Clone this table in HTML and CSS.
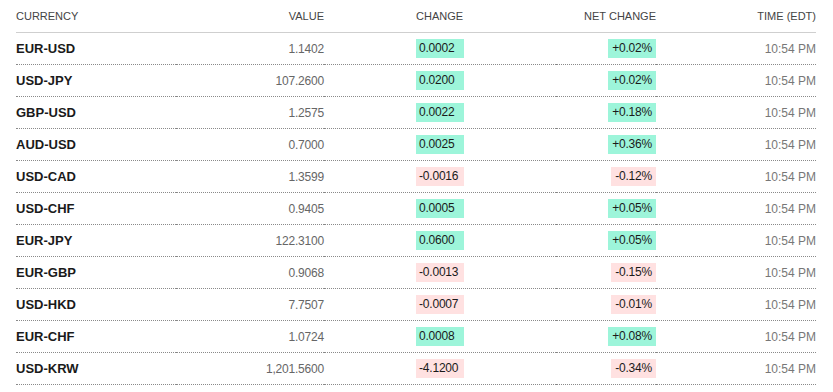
FILE: index.html
```html
<!DOCTYPE html>
<html>
<head>
<meta charset="utf-8">
<link rel="stylesheet" href="styles.css">
</head>
<body>
<div class="wrap">
<table class="fx">
  <colgroup>
    <col class="c-cur"><col class="c-val"><col class="c-chg"><col class="c-net"><col class="c-time">
  </colgroup>
  <thead>
    <tr>
      <th class="left">CURRENCY</th>
      <th class="right">VALUE</th>
      <th class="chg">CHANGE</th>
      <th class="right">NET CHANGE</th>
      <th class="right">TIME (EDT)</th>
    </tr>
  </thead>
  <tbody>
    <tr><td class="cur">EUR-USD</td><td class="val">1.1402</td><td class="chg"><span class="badge up">0.0002</span></td><td class="net"><span class="badge up">+0.02%</span></td><td class="time">10:54 PM</td></tr>
    <tr><td class="cur">USD-JPY</td><td class="val">107.2600</td><td class="chg"><span class="badge up">0.0200</span></td><td class="net"><span class="badge up">+0.02%</span></td><td class="time">10:54 PM</td></tr>
    <tr><td class="cur">GBP-USD</td><td class="val">1.2575</td><td class="chg"><span class="badge up">0.0022</span></td><td class="net"><span class="badge up">+0.18%</span></td><td class="time">10:54 PM</td></tr>
    <tr><td class="cur">AUD-USD</td><td class="val">0.7000</td><td class="chg"><span class="badge up">0.0025</span></td><td class="net"><span class="badge up">+0.36%</span></td><td class="time">10:54 PM</td></tr>
    <tr><td class="cur">USD-CAD</td><td class="val">1.3599</td><td class="chg"><span class="badge down">-0.0016</span></td><td class="net"><span class="badge down">-0.12%</span></td><td class="time">10:54 PM</td></tr>
    <tr><td class="cur">USD-CHF</td><td class="val">0.9405</td><td class="chg"><span class="badge up">0.0005</span></td><td class="net"><span class="badge up">+0.05%</span></td><td class="time">10:54 PM</td></tr>
    <tr><td class="cur">EUR-JPY</td><td class="val">122.3100</td><td class="chg"><span class="badge up">0.0600</span></td><td class="net"><span class="badge up">+0.05%</span></td><td class="time">10:54 PM</td></tr>
    <tr><td class="cur">EUR-GBP</td><td class="val">0.9068</td><td class="chg"><span class="badge down">-0.0013</span></td><td class="net"><span class="badge down">-0.15%</span></td><td class="time">10:54 PM</td></tr>
    <tr><td class="cur">USD-HKD</td><td class="val">7.7507</td><td class="chg"><span class="badge down">-0.0007</span></td><td class="net"><span class="badge down">-0.01%</span></td><td class="time">10:54 PM</td></tr>
    <tr><td class="cur">EUR-CHF</td><td class="val">1.0724</td><td class="chg"><span class="badge up">0.0008</span></td><td class="net"><span class="badge up">+0.08%</span></td><td class="time">10:54 PM</td></tr>
    <tr><td class="cur">USD-KRW</td><td class="val">1,201.5600</td><td class="chg"><span class="badge down">-4.1200</span></td><td class="net"><span class="badge down">-0.34%</span></td><td class="time">10:54 PM</td></tr>
  </tbody>
</table>
</div>
</body>
</html>
```

FILE: styles.css
```css
html, body {
  margin: 0;
  padding: 0;
  background: #ffffff;
}

body {
  font-family: "Liberation Sans", Arial, Helvetica, sans-serif;
  color: #222;
}

.wrap {
  padding: 0 17px 0 16px;
}

.fx {
  width: 800px;
  border-collapse: collapse;
  table-layout: fixed;
}

.c-cur { width: 160px; }
.c-val { width: 148px; }
.c-chg { width: 232px; }
.c-net { width: 100px; }
.c-time { width: 160px; }

.fx th {
  height: 32px;
  padding: 0;
  font-size: 11px;
  font-weight: normal;
  color: #444;
  text-align: right;
  vertical-align: middle;
  border-bottom: 1px solid #cfcfcf;
}

.fx th.left { text-align: left; }
.fx th.chg { text-align: left; padding-left: 92px; }

.fx td {
  height: 31px;
  padding: 0;
  font-size: 12px;
  vertical-align: middle;
  border-bottom: 1px dotted #8a8a8a;
}

.fx td.cur {
  font-size: 13px;
  font-weight: bold;
  color: #1a1a1a;
  text-align: left;
}

.fx td.val {
  color: #666;
  text-align: right;
  letter-spacing: -0.2px;
}

.fx td.chg {
  text-align: left;
  padding-left: 92px;
}

.fx td.net {
  text-align: right;
}

.fx td.time {
  color: #777;
  text-align: right;
}

.badge {
  display: inline-block;
  line-height: 19px;
  padding: 0 4px;
  color: #1a1a1a;
  letter-spacing: -0.2px;
}

.chg .badge {
  min-width: 48px;
  box-sizing: border-box;
  padding: 0 3px;
}

.badge.up { background: #9df5da; }
.badge.down { background: #ffe1e1; }
```
